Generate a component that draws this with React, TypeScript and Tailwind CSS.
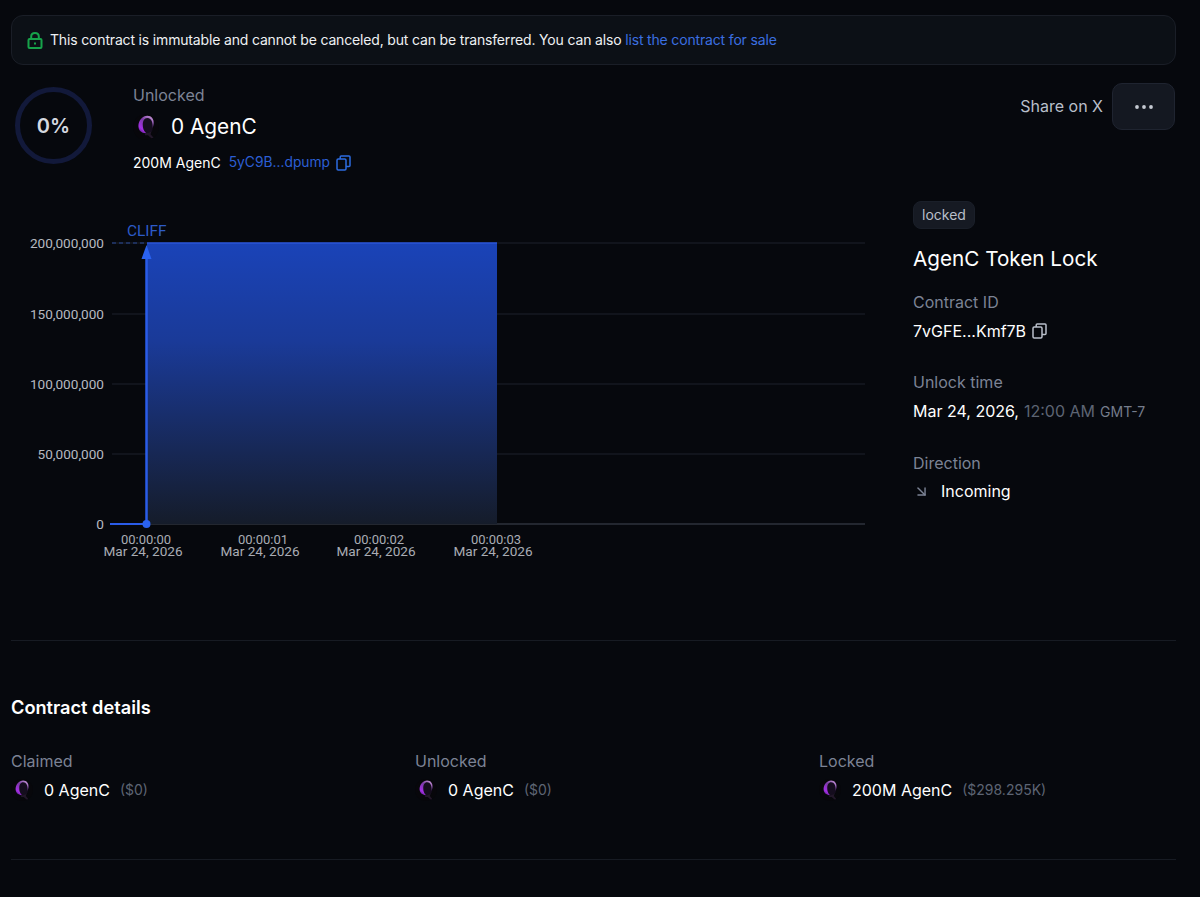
import React from "react";
import { ArrowDownRight } from "lucide-react";

function LockIcon() {
  return (
    <svg width="16" height="17" viewBox="0 0 16 17" className="shrink-0 text-[#16a34a]" fill="none" stroke="currentColor" strokeWidth="2">
      <rect x="1.5" y="7" width="13" height="9" rx="1" />
      <path d="M4.2 7V4.6C4.2 2.5 5.8 1 8 1C10.2 1 11.8 2.5 11.8 4.6V7" />
      <path d="M8 10.6V12.4" strokeWidth="2" />
    </svg>
  );
}

function CopyIcon({ className }: { className: string }) {
  return (
    <svg width="15" height="16" viewBox="0 0 15 16" className={`shrink-0 ${className}`} fill="none" stroke="currentColor" strokeWidth="1.5">
      <rect x="1" y="4" width="9" height="11" rx="1.2" />
      <path d="M4.2 4V2C4.2 1.4 4.6 1 5.2 1H13C13.6 1 14 1.4 14 2V10.6C14 11.2 13.6 11.6 13 11.6H10" />
    </svg>
  );
}

function TokenIcon({ size, id }: { size: number; id: string }) {
  return (
    <svg width={size} height={size} viewBox="0 0 24 24" className="shrink-0">
      <defs>
        <linearGradient id={id} x1="0.85" y1="0" x2="0.15" y2="1">
          <stop offset="0" stopColor="#c79ad6" />
          <stop offset="0.4" stopColor="#7b3aa6" />
          <stop offset="0.8" stopColor="#a42fe6" />
          <stop offset="1" stopColor="#5d1f86" />
        </linearGradient>
      </defs>
      <circle cx="12" cy="12" r="12" fill="#07070b" />
      <path d="M6 11C6 5.5 9 2 13 2C17 2 19.5 5 19 9L18 15L14.5 18L10 18C7.5 17 6 14.5 6 11Z" fill="#150d1e" />
      <path
        d="M5 11C5 5.5 9 1.5 13.2 1.5C17 1.5 19.6 4.6 19 9L18.3 13C18.2 8.5 17.6 3.6 13.2 3.6C10.4 3.6 9 6.5 9 10C9 13 9.7 15.6 12 17.6C7.8 17.6 5 15 5 11Z"
        fill={`url(#${id})`}
      />
      <path d="M11 17.5C14 18 16.2 17 17.4 15L16.2 18.6L19 22L17 22.4L13.8 19.6L11 19.6Z" fill="#221729" />
    </svg>
  );
}

function Chart() {
  const ys = [243, 314, 384, 454];
  const yLabels = ["200,000,000", "150,000,000", "100,000,000", "50,000,000"];
  const xs = [147, 264, 380, 497];
  return (
    <svg width="880" height="370" viewBox="0 200 880 370" className="block">
      <defs>
        <linearGradient id="area" x1="0" y1="0" x2="0" y2="1">
          <stop offset="0" stopColor="#1a43b8" />
          <stop offset="0.35" stopColor="#1a3a98" />
          <stop offset="1" stopColor="#151c2a" />
        </linearGradient>
      </defs>
      {ys.map((y) => (
        <line key={y} x1="112" x2="865" y1={y} y2={y} stroke="#1c212c" strokeWidth="1" />
      ))}
      <line x1="112" x2="865" y1="524" y2="524" stroke="#2e323c" strokeWidth="1.5" />
      <rect x="147" y="243" width="350" height="281" fill="url(#area)" />
      <line x1="147" x2="497" y1="243" y2="243" stroke="#2a55d8" strokeWidth="1.5" />
      <line x1="112" x2="146" y1="243" y2="243" stroke="#2a4a9a" strokeWidth="1" strokeDasharray="4 3" />
      <line x1="146.5" x2="146.5" y1="252" y2="524" stroke="#2a5ce8" strokeWidth="2.5" />
      <line x1="110" x2="146" y1="524" y2="524" stroke="#2a5ce8" strokeWidth="2" />
      <path d="M146.5 245L151.5 259H141.5Z" fill="#2a62f0" />
      <circle cx="146.5" cy="524" r="4" fill="#2a62f0" />
      <text x="127" y="236" fill="#2d5bc8" fontSize="15.4" fontFamily="Roboto, sans-serif">CLIFF</text>
      {ys.map((y, i) => (
        <text key={y} x="104" y={y + 4.5} textAnchor="end" fill="#b6b9c0" fontSize="13.6" fontFamily="Roboto, sans-serif">
          {yLabels[i]}
        </text>
      ))}
      <text x="104" y="528.5" textAnchor="end" fill="#b6b9c0" fontSize="13.6" fontFamily="Roboto, sans-serif">0</text>
      {xs.map((x, i) => (
        <g key={x} fill="#a9acb4" fontFamily="Roboto, sans-serif" textAnchor="middle">
          <text x={x - 1} y="544" fontSize="13">{`00:00:0${i}`}</text>
          <text x={x - 4} y="556" fontSize="13.6">Mar 24, 2026</text>
        </g>
      ))}
    </svg>
  );
}

function Detail({ label, value, usd, id }: { label: string; value: string; usd: string; id: string }) {
  return (
    <div>
      <div className="text-base leading-6 text-[#7c8395]">{label}</div>
      <div className="mt-[5px] flex h-6 items-center">
        <TokenIcon size={22} id={id} />
        <span className="ml-[11px] text-base leading-6 text-white">{value}</span>
        <span className="ml-[10px] text-sm leading-6 text-[#5d6473]">{usd}</span>
      </div>
    </div>
  );
}

export default function App() {
  return (
    <div
      className="min-h-[897px] bg-[#06080d] pl-[11px] pr-[24px] pt-[15px] text-white"
      style={{ fontFamily: "Inter, sans-serif" }}
    >
      <div className="flex h-[50px] items-center rounded-xl border border-[#1a1e27] bg-[#0c1016] pl-[15px] text-sm">
        <LockIcon />
        <span className="ml-[7px] tracking-[-0.165px] text-[#eef0f3]">
          This contract is immutable and cannot be canceled, but can be transferred. You can also{" "}
          <span className="text-[#3b6fe0]">list the contract for sale</span>
        </span>
      </div>

      <div className="mt-[18px] flex h-[100px] justify-between">
        <div className="flex">
          <div className="ml-[4px] mt-[4px] flex h-[77px] w-[77px] items-center justify-center rounded-full border-[5px] border-[#12193a]">
            <span className="text-xl font-semibold text-[#d5d9e0]">0%</span>
          </div>
          <div className="ml-[41px]">
            <div className="h-6 text-base leading-6 text-[#7c8395]">Unlocked</div>
            <div className="mt-[4px] flex h-[32px] items-center">
              <TokenIcon size={26} id="tk-head" />
              <span className="ml-[12px] text-[20.8px] leading-8 text-white">0 AgenC</span>
            </div>
            <div className="mt-[10px] flex h-5 items-center text-sm">
              <span className="text-white">200M AgenC</span>
              <span className="ml-[8px] text-[13.8px] text-[#2c5fd4]">5yC9B...dpump</span>
              <CopyIcon className="ml-[6px] text-[#2c6be0]" />
            </div>
          </div>
        </div>
        <div className="mr-[1px] flex items-start">
          <div className="flex items-center">
            <span className="pb-[2px] text-base text-[#b9bfca]">Share on X</span>
            <div className="ml-[9px] flex h-[47px] w-[63px] items-center justify-center rounded-[10px] border border-[#1f2430] bg-[#141821]">
              <svg width="18" height="4" viewBox="0 0 18 4" className="text-[#c5c9d2]" fill="currentColor">
                <circle cx="2" cy="2" r="1.9" />
                <circle cx="9" cy="2" r="1.9" />
                <circle cx="16" cy="2" r="1.9" />
              </svg>
            </div>
          </div>
        </div>
      </div>

      <div className="mt-[19px] flex h-[439px] border-b border-[#171b23]">
        <div className="-ml-[11px] -mt-[2px] w-[913px] shrink-0">
          <Chart />
        </div>
        <div className="mt-[-1px]">
          <div className="flex h-7 w-[62px] items-center justify-center rounded-lg border border-[#1a1f29] bg-[#161a23] text-sm text-[#b9bfca]">
            locked
          </div>
          <div className="mt-[14px] text-[20.7px] leading-8 text-white">AgenC Token Lock</div>
          <div className="mt-[15px] text-base leading-6 text-[#7c8395]">Contract ID</div>
          <div className="mt-[5px] flex items-center text-base leading-6 text-white">
            7vGFE...Kmf7B
            <CopyIcon className="ml-[6px] text-[#b9bfca]" />
          </div>
          <div className="mt-[27px] text-base leading-6 text-[#7c8395]">Unlock time</div>
          <div className="mt-[5px] flex items-baseline text-base leading-6">
            <span className="text-white">Mar 24, 2026,</span>
            <span className="ml-[5px] text-[#5d6473]">12:00 AM</span>
            <span className="ml-[5px] text-sm text-[#757c8b]">GMT-7</span>
          </div>
          <div className="mt-[28px] text-base leading-6 text-[#7c8395]">Direction</div>
          <div className="mt-[4px] flex items-center text-base leading-6 text-white">
            <ArrowDownRight size={17} className="text-[#7c8395]" />
            <span className="ml-[11px]">Incoming</span>
          </div>
        </div>
      </div>

      <div className="mt-[52px] text-[18.2px] font-semibold leading-7 text-white">Contract details</div>
      <div className="mt-[28px] grid grid-cols-[404px_404px_1fr]">
        <Detail label="Claimed" value="0 AgenC" usd="($0)" id="tk-a" />
        <Detail label="Unlocked" value="0 AgenC" usd="($0)" id="tk-b" />
        <Detail label="Locked" value="200M AgenC" usd="($298.295K)" id="tk-c" />
      </div>
      <div className="mt-[57px] border-b border-[#171b23]" />
    </div>
  );
}
